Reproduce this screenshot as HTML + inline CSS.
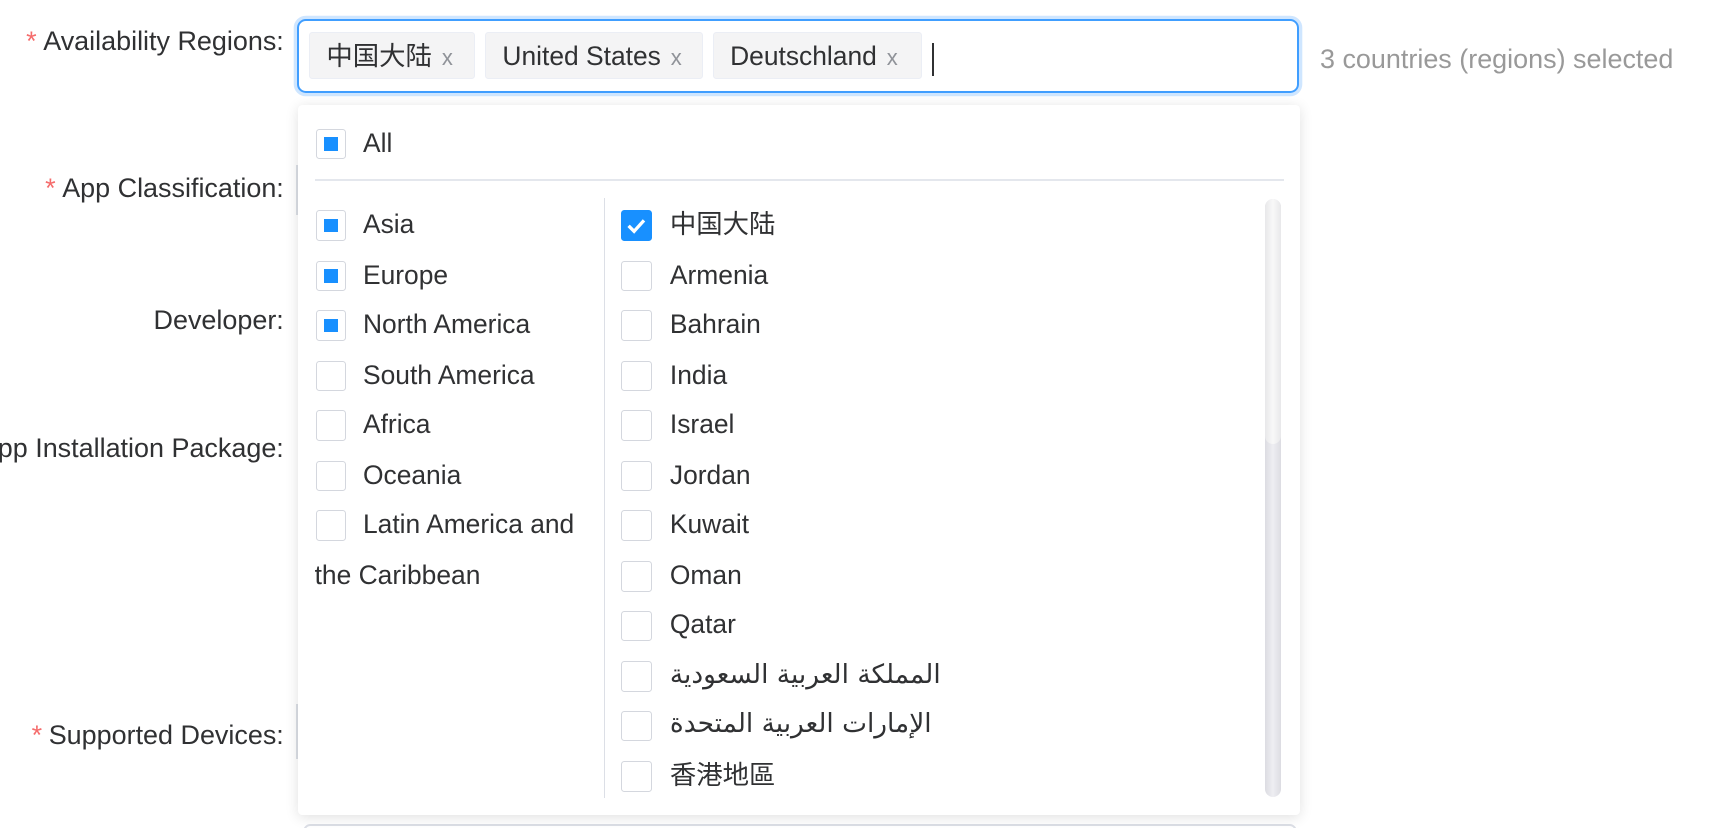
<!DOCTYPE html>
<html><head><meta charset="utf-8"><style>
html,body{margin:0;padding:0;background:#fff;overflow:hidden;width:1722px;height:828px}
#w{zoom:1.1;position:relative;width:1566px;height:753px;font-family:"Liberation Sans","Noto Sans CJK SC","DejaVu Sans",sans-serif;color:#303133;font-size:24px}
.a{position:absolute;white-space:nowrap}
.lbl{position:absolute;right:1308px;text-align:right;white-space:nowrap;line-height:30px;font-size:24.5px}
.req{color:#f56c6c;margin-right:6px}
.box{position:absolute;left:270px;top:17px;width:907px;height:64px;border:2px solid #409eff;border-radius:8px;box-shadow:0 0 0 3px #cfe6ff}
.tag{position:absolute;top:10px;height:43px;background:#f4f4f5;border:1px solid #ebeef5;border-radius:3px;line-height:43px;box-sizing:border-box;padding-left:15px;font-size:24px}
.tag i{font-style:normal;color:#909399;font-size:20px;margin-left:9px}
.dd{position:absolute;left:271px;top:95px;width:911px;height:646px;background:#fff;border-radius:4px;box-shadow:0 2px 12px rgba(0,0,0,.12)}
.cb{position:absolute;width:26px;height:26px;border:1px solid #d4d7de;border-radius:3px;background:#fff}
.cb.ind::after{content:"";position:absolute;left:7px;top:7px;width:12px;height:12px;background:#1890ff}
.cb.chk{background:#1890ff;border-color:#1890ff}
.t{position:absolute;line-height:30px;white-space:nowrap}
.ar{font-family:'DejaVu Sans',sans-serif;font-size:24px}
</style></head><body><div id="w">
<div class="lbl" style="top:23px"><span class="req">*</span>Availability Regions:</div>
<div class="lbl" style="top:156px"><span class="req">*</span>App Classification:</div>
<div class="lbl" style="top:276px">Developer:</div>
<div class="lbl" style="top:393px">App Installation Package:</div>
<div class="lbl" style="top:654px"><span class="req">*</span>Supported Devices:</div>
<div class="a" style="left:269px;top:150px;width:2px;height:45px;background:#dcdfe6"></div>
<div class="a" style="left:269px;top:640px;width:2px;height:50px;background:#dcdfe6"></div>
<div class="a" style="left:275px;top:749px;width:900px;height:10px;border:2px solid #dcdfe6;border-radius:8px"></div>

<div class="box">
 <div class="tag" style="left:9px;width:151px">中国大陆<i>x</i></div>
 <div class="tag" style="left:169px;width:198px">United States<i>x</i></div>
 <div class="tag" style="left:376px;width:190px">Deutschland<i>x</i></div>
 <div class="a" style="left:575px;top:20px;width:2px;height:30px;background:#303133"></div>
</div>
<div class="a" style="left:1200px;top:39px;color:#999;font-size:24.5px;line-height:30px">3 countries (regions) selected</div>

<div class="dd">
 <div class="cb ind" style="left:16px;top:22px"></div><div class="t" style="left:59px;top:20px">All</div>
 <div class="a" style="left:15px;top:68px;width:881px;height:2px;background:#e4e7ed"></div>
 <div class="a" style="left:278px;top:85px;width:1px;height:545px;background:#dcdfe6"></div>
 <div class="a" style="left:879px;top:86px;width:15px;height:544px;border-radius:8px;background:linear-gradient(90deg,#dcdce2,#eeeef2,#dcdce2)"></div>
 <div class="a" style="left:879px;top:86px;width:15px;height:223px;border-radius:8px;background:linear-gradient(90deg,#e8e8ea,#f8f8f8,#e8e8ea)"></div>

 <div class="cb ind" style="left:16px;top:96px"></div><div class="t" style="left:59px;top:94px">Asia</div>
 <div class="cb ind" style="left:16px;top:142px"></div><div class="t" style="left:59px;top:140px">Europe</div>
 <div class="cb ind" style="left:16px;top:187px"></div><div class="t" style="left:59px;top:185px">North America</div>
 <div class="cb" style="left:16px;top:233px"></div><div class="t" style="left:59px;top:231px">South America</div>
 <div class="cb" style="left:16px;top:278px"></div><div class="t" style="left:59px;top:276px">Africa</div>
 <div class="cb" style="left:16px;top:324px"></div><div class="t" style="left:59px;top:322px">Oceania</div>
 <div class="cb" style="left:16px;top:369px"></div><div class="t" style="left:59px;top:367px">Latin America and</div>
 <div class="t" style="left:15px;top:413px">the Caribbean</div>

 <div class="cb chk" style="left:294px;top:96px"><svg width="26" height="26" viewBox="0 0 26 26"><path d="M6 13.5l5 5 9-10" fill="none" stroke="#fff" stroke-width="3"/></svg></div><div class="t" style="left:338px;top:94px">中国大陆</div>
 <div class="cb" style="left:294px;top:142px"></div><div class="t" style="left:338px;top:140px">Armenia</div>
 <div class="cb" style="left:294px;top:187px"></div><div class="t" style="left:338px;top:185px">Bahrain</div>
 <div class="cb" style="left:294px;top:233px"></div><div class="t" style="left:338px;top:231px">India</div>
 <div class="cb" style="left:294px;top:278px"></div><div class="t" style="left:338px;top:276px">Israel</div>
 <div class="cb" style="left:294px;top:324px"></div><div class="t" style="left:338px;top:322px">Jordan</div>
 <div class="cb" style="left:294px;top:369px"></div><div class="t" style="left:338px;top:367px">Kuwait</div>
 <div class="cb" style="left:294px;top:415px"></div><div class="t" style="left:338px;top:413px">Oman</div>
 <div class="cb" style="left:294px;top:460px"></div><div class="t" style="left:338px;top:458px">Qatar</div>
 <div class="cb" style="left:294px;top:506px"></div><div class="t ar" style="left:338px;top:503px">المملكة العربية السعودية</div>
 <div class="cb" style="left:294px;top:551px"></div><div class="t ar" style="left:338px;top:548px">الإمارات العربية المتحدة</div>
 <div class="cb" style="left:294px;top:597px"></div><div class="t" style="left:338px;top:595px">香港地區</div>
</div>
</div></body></html>
